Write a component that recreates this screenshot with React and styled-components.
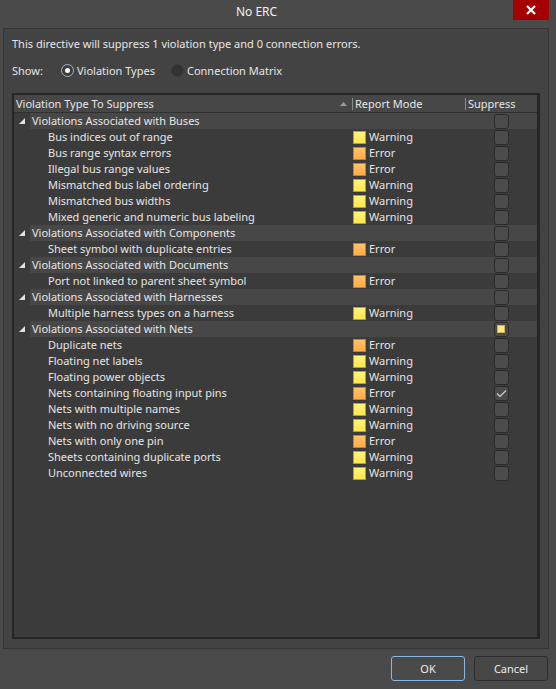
import React from "react";
import styled, { createGlobalStyle } from "styled-components";

const GlobalStyle = createGlobalStyle`
  html, body {
    margin: 0;
    padding: 0;
    background: #4a4a4a;
  }
  body {
    font-family: "Noto Sans", "Open Sans", sans-serif;
    font-size: 11px;
    color: #e6e6e6;
  }
`;

const Window = styled.div`
  width: 556px;
  height: 689px;
  display: flex;
  flex-direction: column;
  background: #4a4a4a;
  overflow: hidden;
`;

const TitleBar = styled.div`
  height: 28px;
  display: flex;
  align-items: flex-start;
`;

const Title = styled.div`
  flex: 1;
  text-align: center;
  line-height: 24px;
  font-size: 12px;
  color: #f2f2f2;
`;

const CloseButton = styled.div`
  width: 36px;
  height: 20px;
  margin-right: 7px;
  background: #a50000;
  display: flex;
  align-items: center;
  justify-content: center;
`;

const Panel = styled.div`
  margin: 0 7px 0 3px;
  height: 621px;
  box-sizing: border-box;
  border: 1px solid #363636;
  background: #434343;
  padding: 7px 8px 9px 8px;
  display: flex;
  flex-direction: column;
`;

const Info = styled.div`
  line-height: 16px;
  height: 16px;
`;

const ShowRow = styled.div`
  display: flex;
  align-items: center;
  height: 16px;
  margin-top: 10px;
`;

const ShowLabel = styled.span`
  width: 49px;
`;

const RadioOption = styled.label`
  display: flex;
  align-items: center;
  gap: 3px;
  margin-right: 16px;
`;

const RadioCircle = styled.span`
  width: 13px;
  height: 13px;
  box-sizing: border-box;
  border-radius: 50%;
  border: 1px solid ${(p) => (p.$on ? "#a7b3c2" : "#3a3a3a")};
  background: ${(p) => (p.$on ? "#3d3d3d" : "#323232")};
  display: flex;
  align-items: center;
  justify-content: center;

  &::after {
    content: "";
    display: ${(p) => (p.$on ? "block" : "none")};
    width: 5px;
    height: 5px;
    border-radius: 50%;
    background: #ffffff;
  }
`;

const Grid = styled.div`
  margin-top: 15px;
  flex: 1;
  border: 2px solid #262626;
  border-right-width: 3px;
  background: #3b3b3b;
  display: flex;
  flex-direction: column;
`;

const Header = styled.div`
  display: grid;
  grid-template-columns: 338px 113px 1fr;
  height: 17px;
  background: #474747;
  border-bottom: 1px solid #303030;
`;

const HeaderCell = styled.div`
  display: flex;
  align-items: center;
  padding-left: ${(p) => (p.$first ? "2px" : "3px")};
  position: relative;
  line-height: 17px;

  ${(p) =>
    !p.$first &&
    `&::before {
      content: "";
      position: absolute;
      left: 0;
      top: 3px;
      height: 12px;
      border-left: 1px solid #8c8c8c;
    }`}
`;

const SortArrow = styled.svg`
  margin-left: auto;
  margin-right: 5px;
`;

const Row = styled.div`
  display: flex;
  height: 16px;
`;

const ToggleCell = styled.div`
  width: 16px;
  display: flex;
  align-items: center;
  justify-content: center;
`;

const RowBody = styled.div`
  flex: 1;
  display: grid;
  grid-template-columns: 322px 113px 1fr;
  align-items: center;
  background: ${(p) => (p.$group ? "#474747" : "transparent")};
`;

const NameCell = styled.div`
  padding-left: ${(p) => (p.$group ? "2px" : "18px")};
  line-height: 16px;
  white-space: nowrap;
`;

const ModeCell = styled.div`
  display: flex;
  align-items: center;
  gap: 3px;
  padding-left: 1px;
  line-height: 16px;
`;

const Swatch = styled.span`
  width: 13px;
  height: 13px;
  box-sizing: border-box;
  border: 1px solid ${(p) => (p.$error ? "#c1852c" : "#b9a41a")};
  background: ${(p) =>
    p.$error
      ? "linear-gradient(#ffc466, #ffaa44)"
      : "linear-gradient(#fff27a, #ffe84a)"};
`;

const SuppressCell = styled.div`
  display: flex;
  justify-content: center;
  align-items: center;
`;

const Check = styled.div`
  width: 15px;
  height: 15px;
  box-sizing: border-box;
  border: 1px solid #2b2b2b;
  border-radius: 3px;
  background: #4b4b4b;
  display: flex;
  align-items: center;
  justify-content: center;
`;

const Partial = styled.span`
  width: 8px;
  height: 8px;
  box-sizing: border-box;
  background: #ffe88a;
  border: 1px solid #c9b45a;
`;

const Footer = styled.div`
  flex: 1;
  display: flex;
  justify-content: flex-end;
  align-items: flex-start;
  gap: 9px;
  padding: 7px 8px 0 0;
`;

const Button = styled.button`
  width: 74px;
  height: 25px;
  border-radius: 3px;
  border: 1px solid ${(p) => (p.$primary ? "#8bb6de" : "#2c2c2c")};
  background: ${(p) => (p.$primary ? "#4a4a4a" : "#474747")};
  color: #ececec;
  font-family: "Noto Sans", "Open Sans", sans-serif;
  font-size: 11px;
  padding: 0;
`;

const groups = [
  {
    name: "Violations Associated with Buses",
    items: [
      ["Bus indices out of range", "w"],
      ["Bus range syntax errors", "e"],
      ["Illegal bus range values", "e"],
      ["Mismatched bus label ordering", "w"],
      ["Mismatched bus widths", "w"],
      ["Mixed generic and numeric bus labeling", "w"],
    ],
  },
  {
    name: "Violations Associated with Components",
    items: [["Sheet symbol with duplicate entries", "e"]],
  },
  {
    name: "Violations Associated with Documents",
    items: [["Port not linked to parent sheet symbol", "e"]],
  },
  {
    name: "Violations Associated with Harnesses",
    items: [["Multiple harness types on a harness", "w"]],
  },
  {
    name: "Violations Associated with Nets",
    partial: true,
    items: [
      ["Duplicate nets", "e"],
      ["Floating net labels", "w"],
      ["Floating power objects", "w"],
      ["Nets containing floating input pins", "e", true],
      ["Nets with multiple names", "w"],
      ["Nets with no driving source", "w"],
      ["Nets with only one pin", "e"],
      ["Sheets containing duplicate ports", "w"],
      ["Unconnected wires", "w"],
    ],
  },
];

const Expander = () => (
  <svg width="6" height="6" viewBox="0 0 6 6">
    <polygon points="6,0 6,6 0,6" fill="#e0e0e0" />
  </svg>
);

const Tick = () => (
  <svg width="11" height="9" viewBox="0 0 11 9">
    <polyline points="1,4.5 4,7.5 10,1.5" fill="none" stroke="#d0d0d0" strokeWidth="1.2" />
  </svg>
);

const GroupRow = ({ name, partial }) => (
  <Row>
    <ToggleCell>
      <Expander />
    </ToggleCell>
    <RowBody $group>
      <NameCell $group>{name}</NameCell>
      <ModeCell />
      <SuppressCell>
        <Check>{partial && <Partial />}</Check>
      </SuppressCell>
    </RowBody>
  </Row>
);

const ItemRow = ({ name, mode, checked }) => (
  <Row>
    <ToggleCell />
    <RowBody>
      <NameCell>{name}</NameCell>
      <ModeCell>
        <Swatch $error={mode === "e"} />
        {mode === "e" ? "Error" : "Warning"}
      </ModeCell>
      <SuppressCell>
        <Check>{checked && <Tick />}</Check>
      </SuppressCell>
    </RowBody>
  </Row>
);

export default function App() {
  return (
    <Window>
      <GlobalStyle />
      <TitleBar>
        <Title>No ERC</Title>
        <CloseButton>
          <svg width="10" height="10" viewBox="0 0 10 10">
            <path d="M1 1 L9 9 M9 1 L1 9" stroke="#ffffff" strokeWidth="2.2" />
          </svg>
        </CloseButton>
      </TitleBar>
      <Panel>
        <Info>This directive will suppress 1 violation type and 0 connection errors.</Info>
        <ShowRow>
          <ShowLabel>Show:</ShowLabel>
          <RadioOption>
            <RadioCircle $on />
            Violation Types
          </RadioOption>
          <RadioOption>
            <RadioCircle />
            Connection Matrix
          </RadioOption>
        </ShowRow>
        <Grid>
          <Header>
            <HeaderCell $first>
              Violation Type To Suppress
              <SortArrow width="7" height="4" viewBox="0 0 7 4">
                <polygon points="3.5,0 7,4 0,4" fill="#9a9a9a" />
              </SortArrow>
            </HeaderCell>
            <HeaderCell>Report Mode</HeaderCell>
            <HeaderCell>Suppress</HeaderCell>
          </Header>
          {groups.map((g) => (
            <React.Fragment key={g.name}>
              <GroupRow name={g.name} partial={g.partial} />
              {g.items.map(([name, mode, checked]) => (
                <ItemRow key={name} name={name} mode={mode} checked={checked} />
              ))}
            </React.Fragment>
          ))}
        </Grid>
      </Panel>
      <Footer>
        <Button $primary>OK</Button>
        <Button>Cancel</Button>
      </Footer>
    </Window>
  );
}
